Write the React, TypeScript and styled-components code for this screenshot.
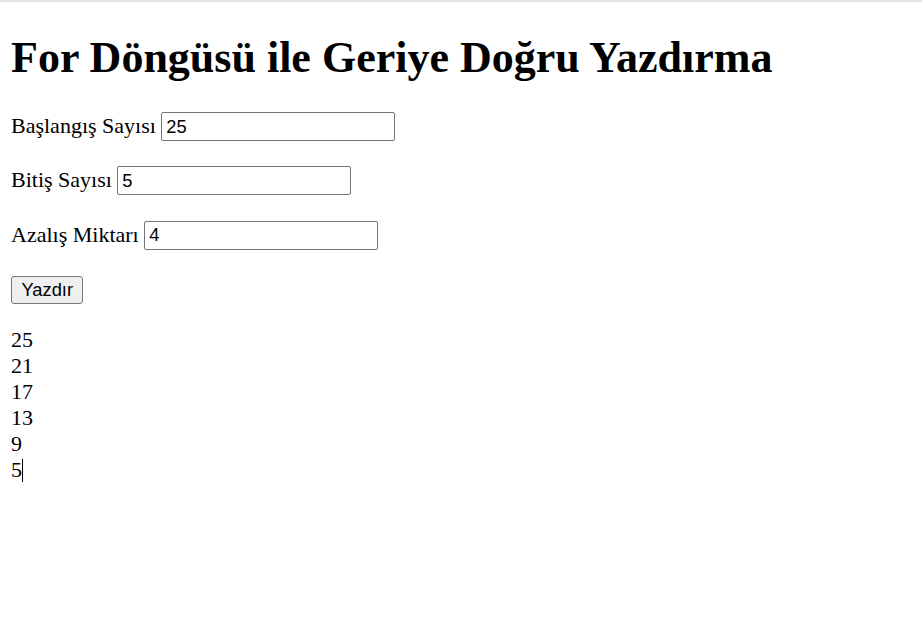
import React, { useState } from 'react';
import styled, { createGlobalStyle } from 'styled-components';

const GlobalStyle = createGlobalStyle`
  html {
    border-top: 2px solid #e3e3e3;
    background: #ffffff;
  }

  body {
    margin: 0 11px 11px;
    font-family: "Liberation Serif", "Times New Roman", serif;
    font-size: 22px;
    color: #000000;
  }
`;

const Title = styled.h1`
  font-size: 44px;
  font-weight: bold;
  margin: 29.5px 0;
`;

// each row is followed by one blank text line
const Field = styled.div`
  margin-bottom: 25.3px;
`;

const NumberInput = styled.input`
  box-sizing: border-box;
  width: 234px;
  height: 29px;
  padding: 1px 4px;
  border: 1px solid #767676;
  border-radius: 2px;
  font-family: "Liberation Sans", Arial, sans-serif;
  font-size: 18.3px;
  color: #000000;
  background: #ffffff;
  vertical-align: baseline;
`;

const ButtonRow = styled.div`
  padding-top: 1px;
`;

const PrintButton = styled.button`
  box-sizing: border-box;
  height: 28px;
  padding: 1px 9.5px;
  border: 1px solid #767676;
  border-radius: 3px;
  background: #efefef;
  font-family: "Liberation Sans", Arial, sans-serif;
  font-size: 18.3px;
  color: #000000;
`;

const Output = styled.div`
  margin: 23px 0;
  line-height: 26px;
`;

const Caret = styled.span`
  display: inline-block;
  width: 1px;
  height: 23px;
  background: #000000;
  vertical-align: -5px;
`;

const countDown = (start: number, end: number, step: number) => {
  const result: number[] = [];
  if (step <= 0) return result;
  for (let i = start; i >= end; i -= step) {
    result.push(i);
  }
  return result;
};

const App = () => {
  const [start, setStart] = useState('25');
  const [end, setEnd] = useState('5');
  const [step, setStep] = useState('4');
  const [values, setValues] = useState<number[]>(() => countDown(25, 5, 4));

  const print = () => setValues(countDown(Number(start), Number(end), Number(step)));

  return (
    <>
      <GlobalStyle />
      <Title>For Döngüsü ile Geriye Doğru Yazdırma</Title>
      <Field>
        Başlangış Sayısı <NumberInput value={start} onChange={(e) => setStart(e.target.value)} />
      </Field>
      <Field>
        Bitiş Sayısı <NumberInput value={end} onChange={(e) => setEnd(e.target.value)} />
      </Field>
      <Field>
        Azalış Miktarı <NumberInput value={step} onChange={(e) => setStep(e.target.value)} />
      </Field>
      <ButtonRow>
        <PrintButton onClick={print}>Yazdır</PrintButton>
      </ButtonRow>
      <Output>
        {values.map((v, i) => (
          <div key={i}>
            {v}
            {i === values.length - 1 && <Caret />}
          </div>
        ))}
      </Output>
    </>
  );
};

export default App;
